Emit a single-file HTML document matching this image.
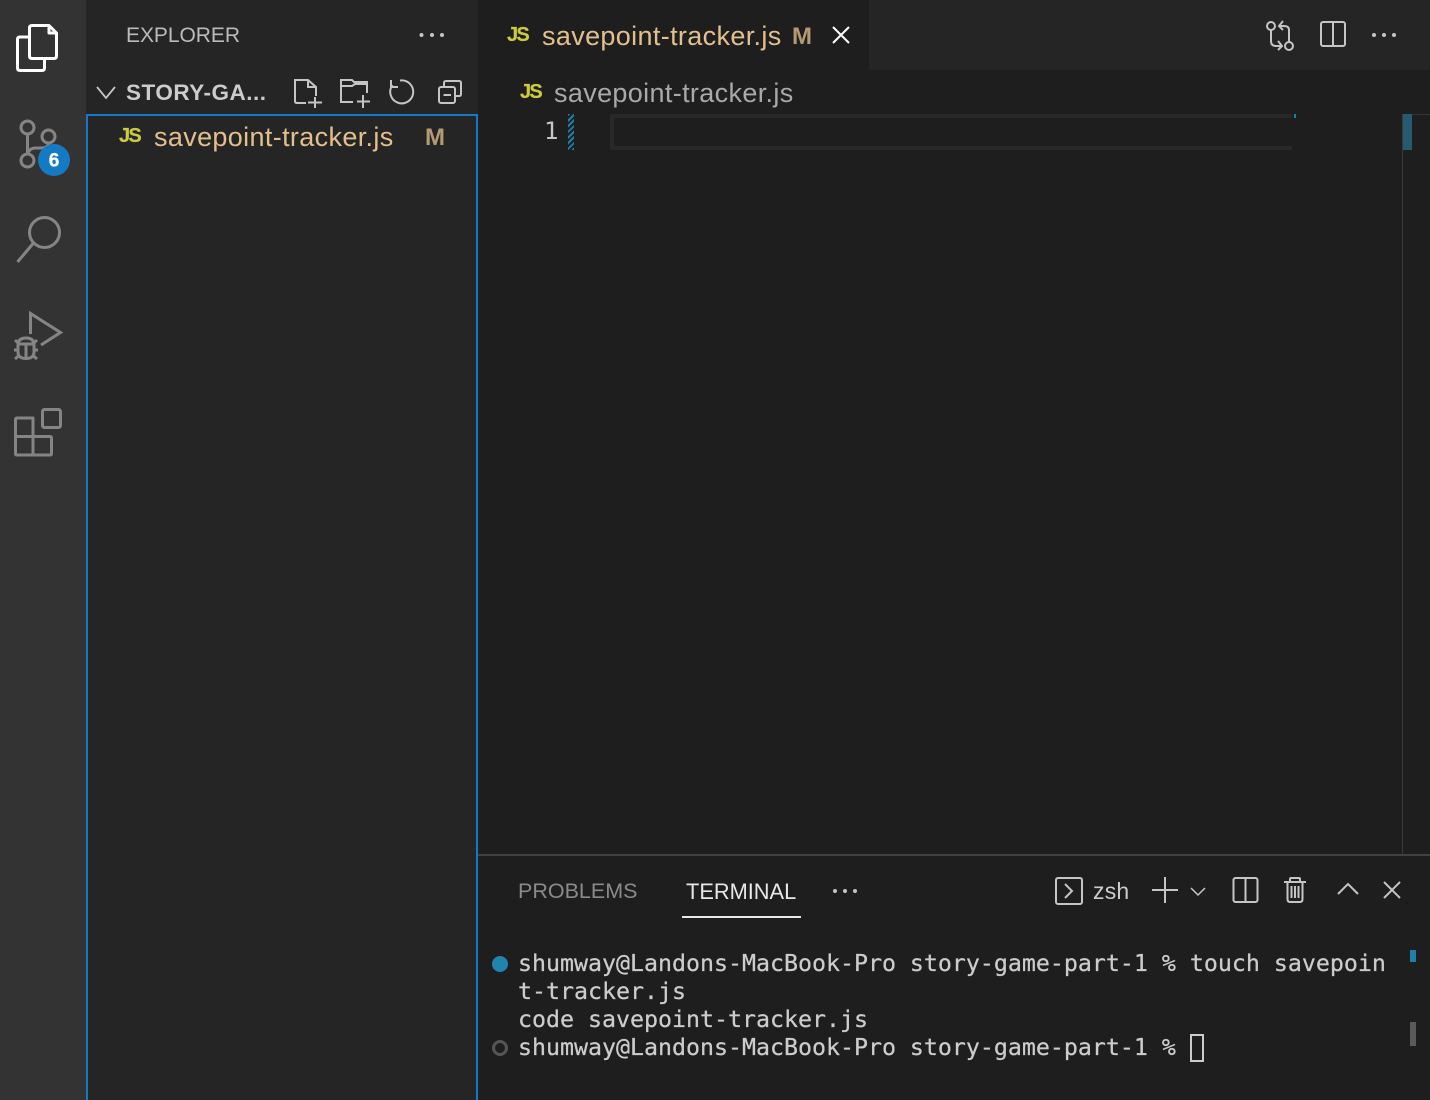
<!DOCTYPE html>
<html><head><meta charset="utf-8"><style>
html,body{margin:0;padding:0;background:#1e1e1e}
#r{position:relative;width:1430px;height:1100px;overflow:hidden;background:#1e1e1e;font-family:"Liberation Sans",sans-serif}
.a{position:absolute}
.t{position:absolute;white-space:pre;line-height:1}
.js{font-size:20px;font-weight:bold;color:#cbcb41;letter-spacing:-1.8px;-webkit-text-stroke:.2px #cbcb41}
.f{font-size:27px;letter-spacing:.35px}
svg{position:absolute;left:0;top:0}
.m{font-family:"DejaVu Sans Mono",monospace;font-size:23.25px;color:#cccccc;letter-spacing:0;line-height:28px;height:28px;-webkit-text-stroke:.25px #cccccc}
</style></head><body><div id="r">
<div class="a" style="left:0;top:0;width:86px;height:1100px;background:#333333"></div>
<div class="a" style="left:86px;top:0;width:392px;height:1100px;background:#252526"></div>
<div class="a" style="left:478px;top:0;width:952px;height:70px;background:#252526"></div>
<div class="a" style="left:478px;top:0;width:391px;height:70px;background:#1e1e1e"></div>
<div class="a" style="left:86px;top:114px;width:388px;height:990px;border:2px solid #157ac4"></div>

<div class="t" style="left:126px;top:25px;font-size:21px;color:#bbbbbb;letter-spacing:-.05px">EXPLORER</div>
<div class="t" style="left:126px;top:82px;font-size:22.5px;font-weight:bold;color:#cccccc;letter-spacing:.5px">STORY-GA...</div>
<div class="t js" style="left:119px;top:126px">JS</div>
<div class="t f" style="left:154px;top:124px;color:#e2c08d">savepoint-tracker.js</div>
<div class="t" style="left:425px;top:126px;font-size:24px;font-weight:bold;color:#b59b75">M</div>

<div class="t js" style="left:507px;top:25px">JS</div>
<div class="t f" style="left:542px;top:23px;color:#e2c08d">savepoint-tracker.js</div>
<div class="t" style="left:792px;top:25px;font-size:24px;font-weight:bold;color:#b59b75">M</div>

<div class="t js" style="left:520px;top:82px">JS</div>
<div class="t f" style="left:554px;top:80px;color:#a9a9a9">savepoint-tracker.js</div>
<div class="t" style="left:544px;top:119px;color:#c6c6c6;font-family:'DejaVu Sans Mono',monospace;font-size:24px">1</div>

<div class="a" style="left:610px;top:114px;width:682px;height:4px;background:#282828"></div>
<div class="a" style="left:610px;top:146px;width:682px;height:4px;background:#282828"></div>
<div class="a" style="left:610px;top:114px;width:4px;height:36px;background:#282828"></div>
<div class="a" style="left:1294px;top:114px;width:2px;height:4px;background:#1b81a8"></div>
<div class="a" style="left:568px;top:114px;width:6px;height:36px;background:repeating-linear-gradient(-45deg,#1b81a8 0,#1b81a8 2px,#1e1e1e 2px,#1e1e1e 4px)"></div>
<div class="a" style="left:1402px;top:114px;width:1px;height:741px;background:#3a3a3a"></div>
<div class="a" style="left:1403px;top:114px;width:27px;height:1px;background:#333333"></div>
<div class="a" style="left:1403px;top:114px;width:9px;height:36px;background:#265a70"></div>

<div class="a" style="left:478px;top:854px;width:952px;height:2px;background:#414141"></div>
<div class="t" style="left:518px;top:881px;font-size:21.5px;color:#8a8a8a">PROBLEMS</div>
<div class="t" style="left:686px;top:881px;font-size:21.8px;color:#e7e7e7">TERMINAL</div>
<div class="a" style="left:682px;top:916px;width:119px;height:2px;background:#e7e7e7"></div>
<div class="t" style="left:1093px;top:880px;font-size:23px;color:#cccccc;letter-spacing:.2px">zsh</div>

<div class="t m" style="left:518px;top:950px">shumway@Landons-MacBook-Pro story-game-part-1 % touch savepoin</div>
<div class="t m" style="left:518px;top:978px">t-tracker.js</div>
<div class="t m" style="left:518px;top:1006px">code savepoint-tracker.js</div>
<div class="t m" style="left:518px;top:1034px">shumway@Landons-MacBook-Pro story-game-part-1 %</div>
<div class="a" style="left:1190px;top:1034px;width:10px;height:24px;border:2px solid #cccccc"></div>
<div class="a" style="left:1410px;top:950px;width:6px;height:12px;background:#1b81a8"></div>
<div class="a" style="left:1410px;top:1022px;width:6px;height:24px;background:#5a5a5a"></div>
<div class="a" style="left:492px;top:956px;width:16px;height:16px;border-radius:50%;background:#1f85ad"></div>
<div class="a" style="left:492px;top:1040px;width:10px;height:10px;border-radius:50%;border:3px solid #555555"></div>

<svg width="1430" height="1100" fill="none">
 <!-- explorer -->
 <g stroke="#ffffff" stroke-width="3" stroke-linejoin="round">
  <path d="M29 37H20Q17.500 37 17.500 39.500V68Q17.500 70.500 20 70.500H42Q44.500 70.500 44.500 68V59"/>
  <path d="M32 25.500H49L56.500 33V56Q56.500 58.500 54 58.500H32Q29.500 58.500 29.500 56V28Q29.500 25.500 32 25.500Z"/>
  <path d="M49 25.500V33H56.500"/>
 </g>
 <!-- scm -->
 <g stroke="#858585" stroke-width="3">
  <circle cx="27.500" cy="127.500" r="6.500"/><circle cx="48.500" cy="136.500" r="6.500"/><circle cx="27.500" cy="160.500" r="6.500"/>
  <path d="M27.500 134V154M27.500 154Q29 148 36 148H42Q48 148 48.500 143"/>
 </g>
 <circle cx="54" cy="160" r="16" fill="#157ac4"/>
 <text x="54" y="166.500" fill="#fff" stroke="#fff" stroke-width=".3" font-family="Liberation Sans" font-weight="bold" font-size="19" text-anchor="middle">6</text>
 <!-- search -->
 <g stroke="#858585" stroke-width="3"><circle cx="44.500" cy="232.500" r="15"/><path d="M33.500 243L17.500 262"/></g>
 <!-- debug -->
 <g stroke="#858585" stroke-width="3">
  <path d="M30.500 334V313.500L60.500 332.500L41 345"/>
  <path d="M18 352V345Q18 338 26 338Q34 338 34 345V352Q34 358.500 26 358.500Q18 358.500 18 352Z"/>
  <path d="M18 344H34M26 344V358M15 340L19 344M37 340L33 344M14 350H18M34 350H38M15 359L19.500 355M37 359L32.500 355"/>
 </g>
 <!-- extensions -->
 <g stroke="#858585" stroke-width="3" stroke-linejoin="round">
  <rect x="42.500" y="409.500" width="18" height="18" rx="2"/>
  <path d="M17 418H33V455H17Q15.500 455 15.500 453.500V419.500Q15.500 418 17 418ZM15.500 436.500H33M33 436.500H50Q51.500 436.500 51.500 438V453.500Q51.500 455 50 455H33"/>
 </g>
 <!-- sidebar icons -->
 <g fill="#c5c5c5"><circle cx="421.500" cy="35" r="2"/><circle cx="432" cy="35" r="2"/><circle cx="442" cy="35" r="2"/></g>
 <g stroke="#c5c5c5" stroke-width="2">
  <path d="M97 87L106 98L115 87" stroke-width="1.800"/>
  <path d="M306 103H297Q295 103 295 101V80H308L316 87V96M308 80V87H316"/>
  <path d="M315 97V108M308 102.500H322"/>
  <path d="M353 102H341V80H352L354 82H367V93M341 86H352L355 84H367"/>
  <path d="M363 95V108M357 101.500H370"/>
  <path d="M400 80.500A11.500 11.500 0 1 1 392.500 85"/>
  <path d="M391 80V87H398"/>
  <rect x="439" y="87" width="16" height="16" rx="2"/>
  <path d="M444 87V83Q444 81 446 81H459Q461 81 461 83V94Q461 96 459 96H455M443.500 95H451"/>
 </g>
 <!-- tab close -->
 <path d="M833 27L849 43M849 27L833 43" stroke="#ffffff" stroke-width="2"/>
 <!-- top right -->
 <g stroke="#c5c5c5" stroke-width="2">
  <circle cx="1271" cy="26" r="4"/><circle cx="1289" cy="46" r="4"/>
  <path d="M1271 30V41Q1271 46 1276 46H1281M1278 41L1282 46L1278 50"/>
  <path d="M1289 42V30Q1289 26 1284 26H1279M1283 21L1279 26L1283 30"/>
  <rect x="1321" y="22" width="24" height="24" rx="2"/><path d="M1333 22V46"/>
 </g>
 <g fill="#c5c5c5"><circle cx="1374" cy="35" r="2"/><circle cx="1384" cy="35" r="2"/><circle cx="1394" cy="35" r="2"/>
  <circle cx="835" cy="891" r="2"/><circle cx="845" cy="891" r="2"/><circle cx="855" cy="891" r="2"/></g>
 <!-- panel icons -->
 <g stroke="#c5c5c5" stroke-width="2">
  <rect x="1056" y="878" width="26" height="26" rx="2"/><path d="M1065 884L1072 891L1065 898"/>
  <path d="M1152 890H1178M1165 877V903"/>
  <path d="M1191 888L1198 895L1205 888" stroke-width="1.500"/>
  <rect x="1233.500" y="878" width="24" height="24" rx="2"/><path d="M1245.500 878V902"/>
  <path d="M1284 882H1306M1290 882V879Q1290 878 1291 878H1299Q1300 878 1300 879V882M1287.500 882V899Q1287.500 902 1290 902H1300Q1302.500 902 1302.500 899V882M1291.500 886V898M1295 886V898M1298.500 886V898"/>
  <path d="M1338 894L1348 884L1358 894"/>
  <path d="M1384 882L1400 898M1400 882L1384 898"/>
 </g>
</svg>
</div></body></html>
